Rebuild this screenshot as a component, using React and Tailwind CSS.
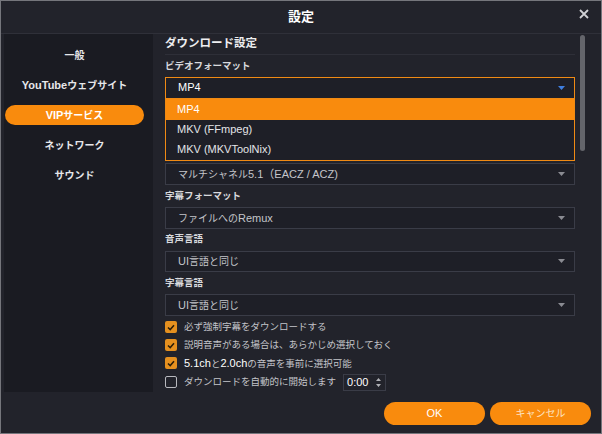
import React from 'react';

const font = "font-['Liberation_Sans','Noto_Sans_CJK_JP',sans-serif]";

function Caret({ color = '#8a8b92' }) {
    return (
        <svg width="7" height="4" viewBox="0 0 7 4">
            <path d="M0 0 H7 L3.5 4 Z" fill={color} />
        </svg>
    );
}

function Select({ children, active = false }) {
    return (
        <div
            className={`h-[22px] flex items-center justify-between pl-[12px] pr-[9px] bg-[#1e1f27] border ${
                active ? 'border-[#f08a14]' : 'border-[#3a3c47]'
            }`}
        >
            <span className={`${active ? 'text-[11px] text-white' : 'text-[10px] text-[#c4c5ca]'}`}>{children}</span>
            <Caret color={active ? '#3f7fe0' : '#8a8b92'} />
        </div>
    );
}

function Label({ children }) {
    return (
        <div className="h-[22px] flex items-center text-[9.5px] font-bold text-[#d8d9dd]">{children}</div>
    );
}

function Check({ checked = true, children }) {
    return (
        <div className="flex items-center gap-[7px] h-[18px]">
            {checked ? (
                <div className="w-[12px] h-[12px] rounded-[2px] bg-[#e5901f] flex items-center justify-center">
                    <svg width="8" height="7" viewBox="0 0 8 7">
                        <path d="M1 3.5 L3.2 5.6 L7 1.2" stroke="#2a1c08" strokeWidth="1.5" fill="none" />
                    </svg>
                </div>
            ) : (
                <div className="w-[12px] h-[12px] rounded-[2px] border border-[#b8b9be]" />
            )}
            <span className="text-[9.5px] text-[#c4c5ca]">{children}</span>
        </div>
    );
}

const Latin = ({ children, className = '' }) => <span className={`text-[11px] ${className}`}>{children}</span>;

export default function App() {
    const nav = [
        { key: 'general', label: '一般' },
        { key: 'youtube', label: <><Latin>YouTube</Latin>ウェブサイト</> },
        { key: 'vip', label: <><Latin>VIP</Latin>サービス</>, active: true },
        { key: 'network', label: 'ネットワーク' },
        { key: 'sound', label: 'サウンド' },
    ];

    return (
        <div className={`w-[602px] h-[434px] bg-[#22232b] border border-[#75767c] flex flex-col ${font}`}>
            {/* Title bar */}
            <div className="relative h-[33px] shrink-0 flex items-center justify-center border-b border-[#2f3039]">
                <span className="text-[13px] font-bold text-white">設定</span>
                <button className="absolute right-[12px] top-[8px] text-[#d0d1d5]">
                    <svg width="10" height="10" viewBox="0 0 10 10">
                        <path d="M1 1 L9 9 M9 1 L1 9" stroke="currentColor" strokeWidth="1.8" />
                    </svg>
                </button>
            </div>

            {/* Body */}
            <div className="flex h-[358px] shrink-0">
                {/* Sidebar */}
                <div className="w-[149px] ml-[3px] bg-[#1a1b22] pt-[11px] flex flex-col gap-[10px]">
                    {nav.map((item) => (
                        <div
                            key={item.key}
                            className={`h-[20px] mx-[1px] w-[139px] rounded-full flex items-center justify-center text-[10px] font-bold ${
                                item.active ? 'bg-[#f98b0d] text-white' : 'text-[#e6e7ea]'
                            }`}
                        >
                            {item.label}
                        </div>
                    ))}
                </div>

                {/* Content */}
                <div className="flex-1 pl-[12px] pr-[4px] flex">
                    <div className="w-[410px] flex flex-col">
                        <div className="h-[21px] flex items-center border-b border-[#2e2f38] text-[11.5px] font-bold text-[#eeeef0]">
                            ダウンロード設定
                        </div>
                        <Label>ビデオフォーマット</Label>
                        <div className="relative">
                            <Select active>MP4</Select>
                            {/* Open dropdown */}
                            <div className="absolute left-0 right-0 top-[22px] h-[62px] bg-[#1e1f27] border border-[#f08a14] border-t-0 z-10 flex flex-col">
                                <div className="h-[21px] flex items-center pl-[11px] bg-[#f98b0d] text-[11px] text-white">MP4</div>
                                <div className="h-[20px] flex items-center pl-[11px] text-[11px] text-[#e4e5e8]">MKV (FFmpeg)</div>
                                <div className="h-[20px] flex items-center pl-[11px] text-[11px] text-[#e4e5e8]">MKV (MKVToolNix)</div>
                            </div>
                        </div>
                        <div className="h-[65px]" />
                        <Select>マルチシャネル<Latin>5.1（EACZ / ACZ)</Latin></Select>
                        <Label>字幕フォーマット</Label>
                        <Select>ファイルへの<Latin>Remux</Latin></Select>
                        <Label>音声言語</Label>
                        <Select><Latin>UI</Latin>言語と同じ</Select>
                        <Label>字幕言語</Label>
                        <Select><Latin>UI</Latin>言語と同じ</Select>
                        <div className="mt-[2px] flex flex-col">
                            <Check>必ず強制字幕をダウンロードする</Check>
                            <Check>説明音声がある場合は、あらかじめ選択しておく</Check>
                            <Check>
                                <Latin className="text-white">5.1ch</Latin>と<Latin className="text-white">2.0ch</Latin>の音声を事前に選択可能
                            </Check>
                            <div className="flex items-center gap-[7px] h-[20px]">
                                <div className="w-[12px] h-[12px] rounded-[2px] border border-[#b8b9be]" />
                                <span className="text-[9.5px] text-[#c4c5ca]">ダウンロードを自動的に開始します</span>
                                <div className="w-[43px] h-[17px] border border-[#3a3c47] flex items-center justify-between pl-[3px] pr-[4px]">
                                    <span className="text-[11px] text-white">0:00</span>
                                    <svg width="5" height="9" viewBox="0 0 5 9">
                                        <path d="M0 3 L2.5 0 L5 3 Z M0 6 L2.5 9 L5 6 Z" fill="#b0b1b6" />
                                    </svg>
                                </div>
                            </div>
                        </div>
                    </div>
                    {/* Scrollbar */}
                    <div className="ml-[5px] pt-[1px]">
                        <div className="w-[5px] h-[116px] rounded-full bg-[#64656b]" />
                    </div>
                </div>
            </div>

            {/* Footer */}
            <div className="flex-1 flex items-start justify-end gap-[5px] pt-[10px] pr-[10px]">
                <button className="w-[101px] h-[23px] rounded-full bg-[#f98b0d] text-[11px] text-white">OK</button>
                <button className="w-[101px] h-[23px] rounded-full bg-[#f98b0d] text-[10px] text-[#fde3c4]">キャンセル</button>
            </div>
        </div>
    );
}
